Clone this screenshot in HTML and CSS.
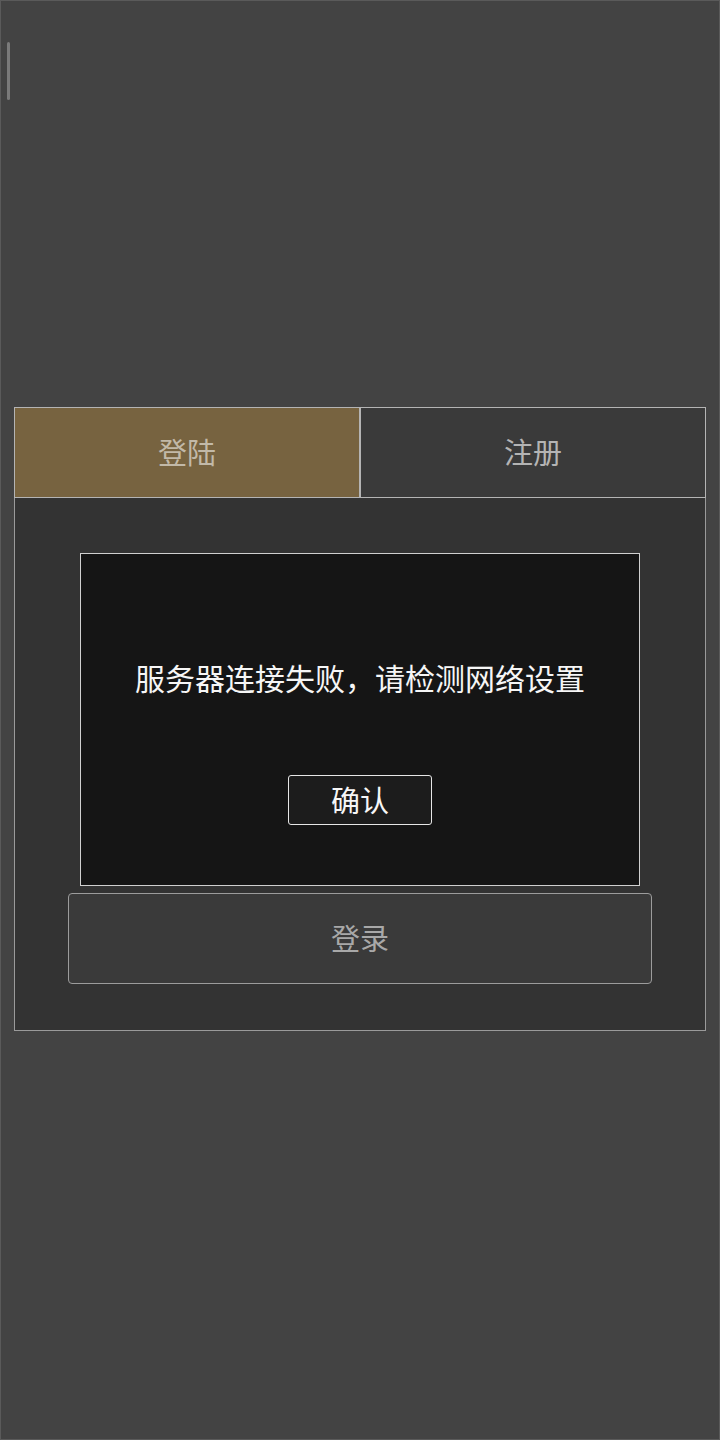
FILE: index.html
```html
<!DOCTYPE html>
<html lang="zh-CN">
<head>
<meta charset="utf-8">
<title>登陆</title>
<link rel="stylesheet" href="styles.css">
</head>
<body>
<div class="screen">
  <div class="scroll-thumb"></div>
  <div class="card">
    <div class="tabs">
      <div class="tab tab-active">登陆</div>
      <div class="tab">注册</div>
    </div>
    <div class="panel">
      <div class="dialog">
        <div class="dialog-msg">服务器连接失败，请检测网络设置</div>
        <div class="dialog-btn">确认</div>
      </div>
      <div class="login-btn">登录</div>
    </div>
  </div>
</div>
</body>
</html>
```

FILE: styles.css
```css
html, body {
  margin: 0;
  padding: 0;
  background: #434343;
}
body {
  font-family: "Noto Sans CJK SC", "Noto Sans", sans-serif;
}
.screen {
  position: relative;
  width: 720px;
  height: 1440px;
  box-sizing: border-box;
  padding-top: 407px;
  background: #434343;
  box-shadow: inset 0 0 0 1px #5a5a5a;
}
.scroll-thumb {
  position: absolute;
  left: 7px;
  top: 42px;
  width: 3px;
  height: 58px;
  border-radius: 2px;
  background: #7a7a7a;
}
.card {
  margin: 0 14px;
}
.tabs {
  display: grid;
  grid-template-columns: 1fr 1fr;
  height: 91px;
}
.tab {
  display: flex;
  align-items: center;
  justify-content: center;
  border: 1px solid #b4b4b4;
  padding-bottom: 4px;
  background: #3a3a3a;
  color: #b4b4b4;
  font-size: 29px;
}
.tab-active {
  background: #776340;
  color: #c2b9a8;
}
.panel {
  background: #333333;
  border: 1px solid #9a9a9a;
  border-top: none;
  padding: 55px 0 46px;
  display: flex;
  flex-direction: column;
  align-items: center;
}
.dialog {
  width: 560px;
  height: 333px;
  box-sizing: border-box;
  background: #151515;
  border: 1px solid #d0d0d0;
  padding: 103px 0 60px;
  display: flex;
  flex-direction: column;
  align-items: center;
}
.dialog-msg {
  color: #f6f6f6;
  font-size: 30px;
  line-height: 40px;
  white-space: nowrap;
}
.dialog-btn {
  margin-top: 78px;
  width: 144px;
  height: 50px;
  box-sizing: border-box;
  border: 1.5px solid #e6e6e6;
  border-radius: 3px;
  padding-bottom: 3px;
  background: #1c1c1c;
  color: #f6f6f6;
  font-size: 29px;
  display: flex;
  align-items: center;
  justify-content: center;
}
.login-btn {
  margin-top: 7px;
  width: 584px;
  height: 91px;
  box-sizing: border-box;
  border: 1.5px solid #9c9c9c;
  border-radius: 4px;
  padding-bottom: 4px;
  background: #3a3a3a;
  color: #a8a8a8;
  font-size: 29px;
  display: flex;
  align-items: center;
  justify-content: center;
}
```
